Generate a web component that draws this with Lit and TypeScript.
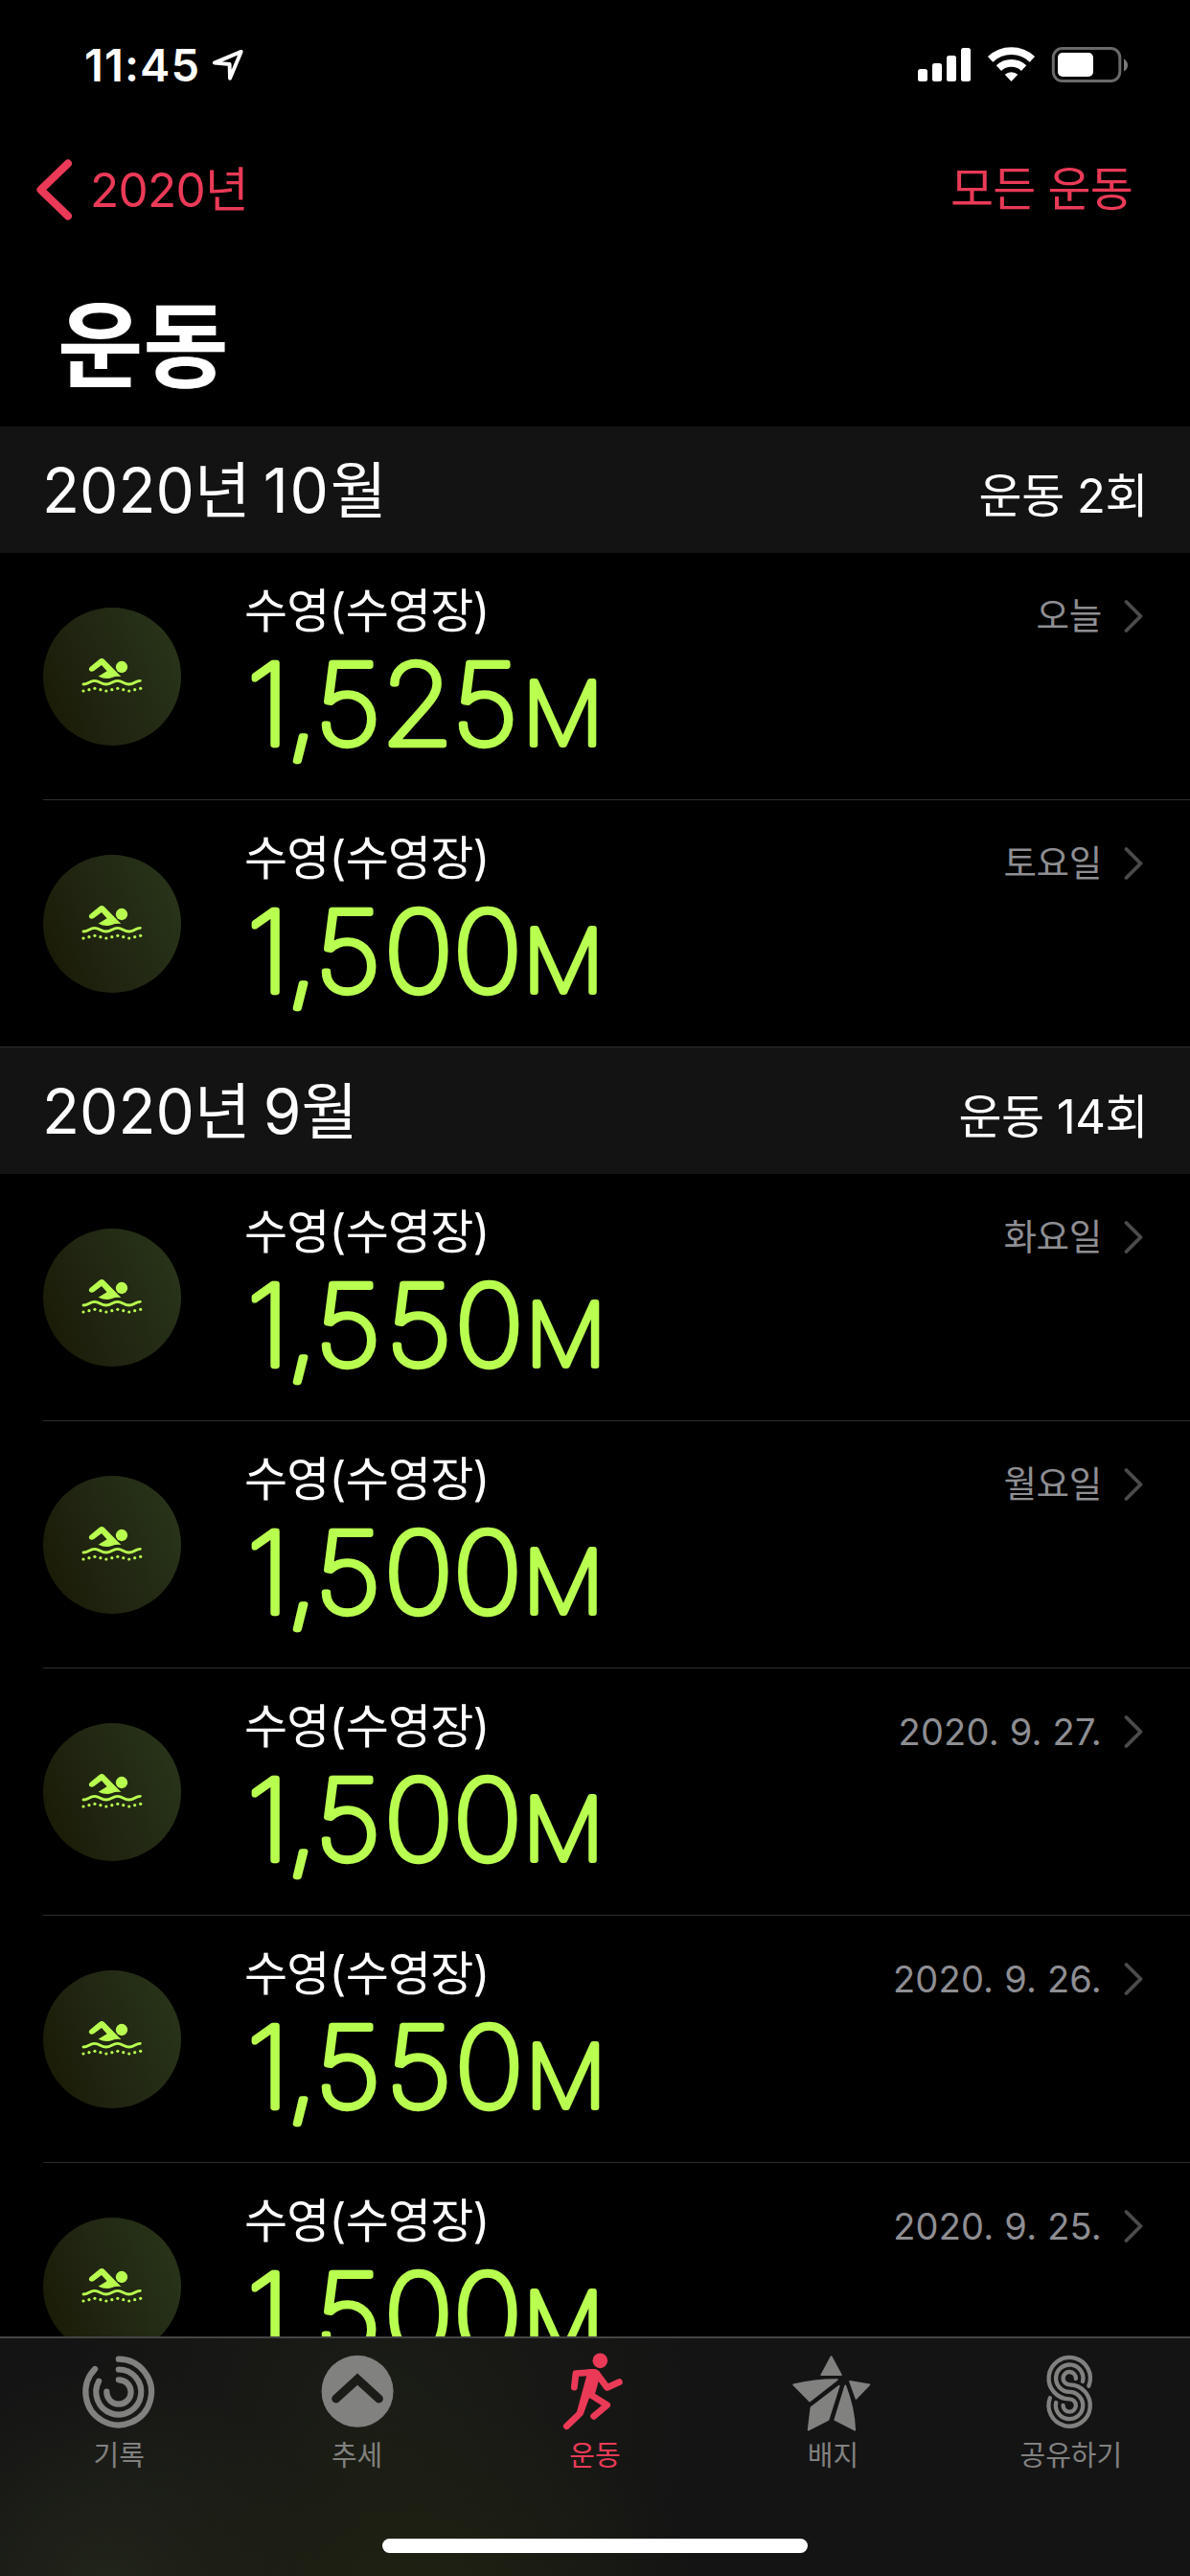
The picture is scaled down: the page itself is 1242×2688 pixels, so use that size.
import { LitElement, html, svg, css, type TemplateResult } from "lit";
import { customElement, property } from "lit/decorators.js";

interface Workout {
  distance: string;
  when: string;
}

interface Month {
  year: string;
  month: string;
  count: string;
  workouts: Workout[];
}

const MONTHS: Month[] = [
  {
    year: "2020년",
    month: "10월",
    count: "운동 2회",
    workouts: [
      { distance: "1,525", when: "오늘" },
      { distance: "1,500", when: "토요일" },
    ],
  },
  {
    year: "2020년",
    month: "9월",
    count: "운동 14회",
    workouts: [
      { distance: "1,550", when: "화요일" },
      { distance: "1,500", when: "월요일" },
      { distance: "1,500", when: "2020. 9. 27." },
      { distance: "1,550", when: "2020. 9. 26." },
      { distance: "1,500", when: "2020. 9. 25." },
    ],
  },
];

/* Horizontal start of every digit, and of the unit, inside the distance label. */
const KERNING: Record<string, { digits: string; unit: number }> = {
  "1,525": { digits: "3.2 42.9 71.3 136.6 207.5", unit: 277.3 },
  "1,500": { digits: "3.2 42.9 71.3 139.5 208.1", unit: 277.8 },
  "1,550": { digits: "3.2 42.9 71.3 141.7 209.8", unit: 280.2 },
};

const FONT = css`Inter, "Noto Sans CJK KR", sans-serif`;

@customElement("workout-row")
class WorkoutRow extends LitElement {
  @property({ attribute: false }) workout!: Workout;
  @property({ type: Boolean, reflect: true }) last = false;

  static styles = css`
    :host {
      display: block;
      height: 258px;
      box-sizing: border-box;
      padding-left: 45px;
      font-family: ${FONT};
      font-weight: 380;
    }
    :host([last]) {
      border-bottom: 1px solid #2e2e2f;
    }
    .row {
      display: flex;
      align-items: flex-start;
      height: 257px;
      border-bottom: 1px solid #2e2e2f;
    }
    :host([last]) .row {
      border-bottom: 0;
    }
    .badge {
      flex: none;
      display: flex;
      align-items: center;
      justify-content: center;
      width: 144px;
      height: 144px;
      margin-top: 57px;
      border-radius: 50%;
      background: linear-gradient(68deg, #1a1b06 8%, #212612 45%, #283419 92%);
    }
    .badge svg {
      width: 72px;
      height: 42px;
    }
    .info {
      flex: 1;
      padding: 31px 0 0 65px;
    }
    .name {
      padding-left: 1px;
      color: #fff;
      font-size: 49px;
      line-height: 60px;
      letter-spacing: -0.8px;
      white-space: nowrap;
    }
    .distance {
      display: block;
      width: 400px;
      height: 150px;
      overflow: visible;
    }
    .distance text {
      font-family: ${FONT};
      font-weight: 100;
      font-size: 117px;
      fill: #b9ff50;
      stroke: #b9ff50;
      stroke-width: 6.3px;
      stroke-linejoin: round;
    }
    .distance .unit {
      font-size: 90px;
      stroke-width: 6px;
    }
    .when {
      display: flex;
      align-items: center;
      gap: 23px;
      margin: 36px 49px 0 0;
      color: #8e8e93;
      font-size: 37.5px;
      line-height: 60px;
      letter-spacing: -0.3px;
      white-space: nowrap;
    }
    .when.numeric {
      font-size: 38px;
      letter-spacing: 0.2px;
    }
    .when svg {
      width: 20px;
      height: 36px;
    }
  `;

  render() {
    const { distance, when } = this.workout;
    const kern = KERNING[distance];
    return html`
      <div class="row">
        <div class="badge">
          <svg viewBox="153 195 216 126" fill="#b9ff50">
            <circle cx="291" cy="228" r="18.5" />
            <path
              d="M191 229 L221 204 Q229 198 236 204 L289 258 Q272 256 261 261 Q240 268 218 257 L245 241 L228 222 L204 240 Q196 245 190 239 Q186 234 191 229 Z"
            />
            <path
              fill="none"
              stroke="#b9ff50"
              stroke-width="8.5"
              stroke-linecap="round"
              d="M171 282 C187 282 190 271 206 271 S226 282 242 282 S262 271 278 271 S298 282 314 282 S333 271 349 271"
            />
            ${[303, 299, 295, 299, 303, 299, 295, 299, 303, 299, 295].map(
              (y, i) => svg`<circle cx=${171 + i * 17.9} cy=${y} r="4.8" />`
            )}
          </svg>
        </div>
        <div class="info">
          <div class="name">수영(수영장)</div>
          <svg class="distance" viewBox="0 0 400 150">
            <text y="108.8" transform="scale(1.05 1)" x=${kern.digits}>${distance}<tspan class="unit" x=${kern.unit}>M</tspan></text>
          </svg>
        </div>
        <div class="when ${/^\d/.test(when) ? "numeric" : ""}">
          <span>${when}</span>
          <svg viewBox="0 0 20 36">
            <path
              d="M2.5 3 L17.5 18 L2.5 33"
              fill="none"
              stroke="#4b4b4d"
              stroke-width="3.8"
              stroke-linecap="round"
              stroke-linejoin="round"
            />
          </svg>
        </div>
      </div>
    `;
  }
}

interface Tab {
  label: string;
  viewBox: string;
  icon: TemplateResult;
  active?: boolean;
}

const TABS: Tab[] = [
  {
    label: "기록",
    viewBox: "30.6 66 264 258",
    icon: svg`<g fill="none" stroke="currentColor" stroke-width="18.5" stroke-linecap="round">
      <path d="M162 95 A103 103 0 1 1 88 126" />
      <path d="M162 127.5 A70.5 70.5 0 1 1 100 164.5" />
      <path d="M162 160 A38 38 0 1 1 124.5 197" />
    </g>`,
  },
  {
    label: "추세",
    viewBox: "775.8 66 264 258",
    icon: svg`<circle cx="908" cy="196" r="112.5" fill="currentColor" />
      <path d="M841 219 L908 158 L975 219" fill="none" stroke="#1b1c17" stroke-width="27" stroke-linecap="round" />`,
  },
  {
    label: "운동",
    viewBox: "21 66 264 258",
    active: true,
    icon: svg`<circle cx="169" cy="100" r="23.5" fill="currentColor" />
      <path fill="currentColor" d="M126 149 L130 127 L150 126 Q163 128 169 138 L164 165 L154 201 L134 219 L116 268 L96 260 Z" />
      <g fill="none" stroke="currentColor" stroke-width="20.5" stroke-linecap="round" stroke-linejoin="round">
        <path d="M88 183 L93 140 L150 136" />
        <path d="M158 140 L191 184 L229 167" />
        <path d="M143 209 L191 239 L149 274" />
        <path d="M128 200 L106 265 L64 305" />
      </g>`,
  },
  {
    label: "배지",
    viewBox: "766.2 66 264 258",
    icon: svg`<g fill="currentColor" stroke="currentColor" stroke-width="5" stroke-linejoin="round">
      <path d="M894 87 L925 144.5 L863 144.5 Z" />
      <path d="M775.5 175 Q840 159 913 159 L826.5 227 Z" />
      <path d="M918.5 179 L885 285 L822 317 L830.5 246.5 Z" />
      <path d="M938 178 Q965 245 968 317 L905 285 Z" />
      <path d="M952 164.5 L1013.5 175 L971.5 219 Z" />
    </g>`,
  },
  {
    label: "공유하기",
    viewBox: "71.4 66 264 258",
    icon: svg`<g fill="none" stroke="currentColor" stroke-width="13" stroke-linecap="round">
      <path d="M258.5 179 A65 65 0 1 0 198 220 A20 20 0 1 1 178 240" />
      <path d="M239.5 165 A42.5 42.5 0 1 0 198 197.5 A42.5 42.5 0 1 1 156 231" />
      <path d="M218 156 A20 20 0 1 0 198 175 A65 65 0 1 1 137 217" />
    </g>`,
  },
];

@customElement("app-root")
class AppRoot extends LitElement {
  static styles = css`
    :host {
      display: flex;
      flex-direction: column;
      height: 2688px;
      overflow: hidden;
      background: #000;
      color: #fff;
      font-family: ${FONT};
      font-weight: 380;
    }
    .status {
      flex: none;
      display: flex;
      align-items: center;
      height: 132px;
      box-sizing: border-box;
      padding: 4px 64px 0 88px;
    }
    .time {
      width: 130px;
      font-size: 47px;
      font-weight: 600;
      line-height: 60px;
      letter-spacing: 1.1px;
      white-space: nowrap;
    }
    .location {
      width: 40px;
      height: 40px;
    }
    .signals {
      width: 222px;
      height: 40px;
      margin-left: auto;
    }
    .nav {
      flex: none;
      display: flex;
      align-items: center;
      height: 132px;
      box-sizing: border-box;
      padding: 0 60px 0 36px;
      color: #ea3a57;
      font-size: 49.5px;
      line-height: 60px;
      letter-spacing: -0.7px;
    }
    .back {
      width: 41px;
      height: 66px;
      margin-right: 17px;
    }
    .all {
      margin-left: auto;
      font-size: 49px;
      letter-spacing: -0.8px;
    }
    .title {
      flex: none;
      height: 181px;
      box-sizing: border-box;
      margin: 0;
      padding: 37px 0 0 60px;
      font-size: 97px;
      font-weight: 600;
      line-height: 120px;
    }
    .list {
      flex: 1;
      min-height: 0;
      overflow: hidden;
    }
    .month {
      display: flex;
      align-items: baseline;
      justify-content: space-between;
      height: 132px;
      box-sizing: border-box;
      padding: 27px 44px 0 44px;
      background: #131313;
    }
    .month h2 {
      margin: 0;
      font-size: 64px;
      font-weight: inherit;
      line-height: 80px;
      word-spacing: -5px;
    }
    .month .two-digit {
      letter-spacing: 1.8px;
    }
    .count {
      font-size: 49px;
      line-height: 60px;
      letter-spacing: -0.5px;
    }
    .tabs {
      flex: none;
      display: flex;
      flex-direction: column;
      align-items: center;
      height: 250px;
      box-sizing: border-box;
      border-top: 2px solid #454545;
      background:
        radial-gradient(300px 210px at 430px 270px, #1f2212 0%, rgba(31, 34, 18, 0) 100%),
        radial-gradient(240px 230px at 110px 260px, #22251a 0%, rgba(34, 37, 26, 0) 100%),
        radial-gradient(330px 300px at 400px 80px, #1b1d16 0%, rgba(27, 29, 22, 0) 100%),
        #141414;
    }
    .items {
      display: flex;
      align-self: stretch;
      height: 209px;
    }
    .tab {
      flex: 1 1 0;
      display: flex;
      flex-direction: column;
      align-items: center;
      padding-top: 12px;
      color: #818180;
      font-size: 29px;
      font-weight: 380;
      line-height: 40px;
      white-space: nowrap;
    }
    .tab.active {
      color: #ea3a57;
    }
    .tab svg {
      width: 88px;
      height: 86px;
      margin-bottom: 5px;
    }
    .home {
      width: 444px;
      height: 15px;
      border-radius: 8px;
      background: #fff;
    }
  `;

  render() {
    return html`
      <div class="status">
        <div class="time">11:45</div>
        <svg class="location" viewBox="218 48 40 40">
          <path
            d="M251.7 53.9 L223.8 65.6 L239.6 67 L240 81.7 Z"
            fill="none"
            stroke="#fff"
            stroke-width="3.9"
            stroke-linejoin="round"
          />
        </svg>
        <svg class="signals" viewBox="956 48 222 40">
          <g fill="#fff">
            <rect x="958" y="72" width="10" height="13" rx="2.5" />
            <rect x="973" y="66" width="10" height="19" rx="2.5" />
            <rect x="988" y="58" width="10" height="27" rx="2.5" />
            <rect x="1003" y="50" width="10" height="35" rx="2.5" />
            <path d="M1055.5 85 L1048.7 77.7 A10.5 10.5 0 0 1 1062.3 77.7 Z" />
            <rect x="1104" y="55" width="37" height="25" rx="5" />
          </g>
          <g fill="none" stroke="#fff" stroke-width="7.7">
            <path d="M1033.6 61.9 A31.8 31.8 0 0 1 1077.4 61.9" />
            <path d="M1042.4 71.1 A19.1 19.1 0 0 1 1068.6 71.1" />
          </g>
          <rect x="1099.3" y="50.5" width="69.5" height="34" rx="9.5" fill="none" stroke="#6a6a6a" stroke-width="3" />
          <path d="M1173 61.5 Q1177 64 1177 68 Q1177 72 1173 74.5 Z" fill="#7a7a7a" />
        </svg>
      </div>
      <div class="nav">
        <svg class="back" viewBox="36 165.5 41 66">
          <path
            d="M71 171 L42.5 198.5 L71 226"
            fill="none"
            stroke="currentColor"
            stroke-width="8"
            stroke-linecap="round"
            stroke-linejoin="round"
          />
        </svg>
        <span>2020년</span>
        <span class="all">모든 운동</span>
      </div>
      <h1 class="title">운동</h1>
      <div class="list">
        ${MONTHS.map(
          (month) => html`
            <div class="month">
              <h2>${month.year} <span class=${month.month.length > 2 ? "two-digit" : ""}>${month.month}</span></h2>
              <span class="count">${month.count}</span>
            </div>
            ${month.workouts.map(
              (workout, i) => html`<workout-row
                .workout=${workout}
                ?last=${i === month.workouts.length - 1}
              ></workout-row>`
            )}
          `
        )}
      </div>
      <div class="tabs">
        <div class="items">
          ${TABS.map(
            (tab) => html`<div class="tab ${tab.active ? "active" : ""}">
              <svg viewBox=${tab.viewBox}>${tab.icon}</svg>
              <span>${tab.label}</span>
            </div>`
          )}
        </div>
        <div class="home"></div>
      </div>
    `;
  }
}
